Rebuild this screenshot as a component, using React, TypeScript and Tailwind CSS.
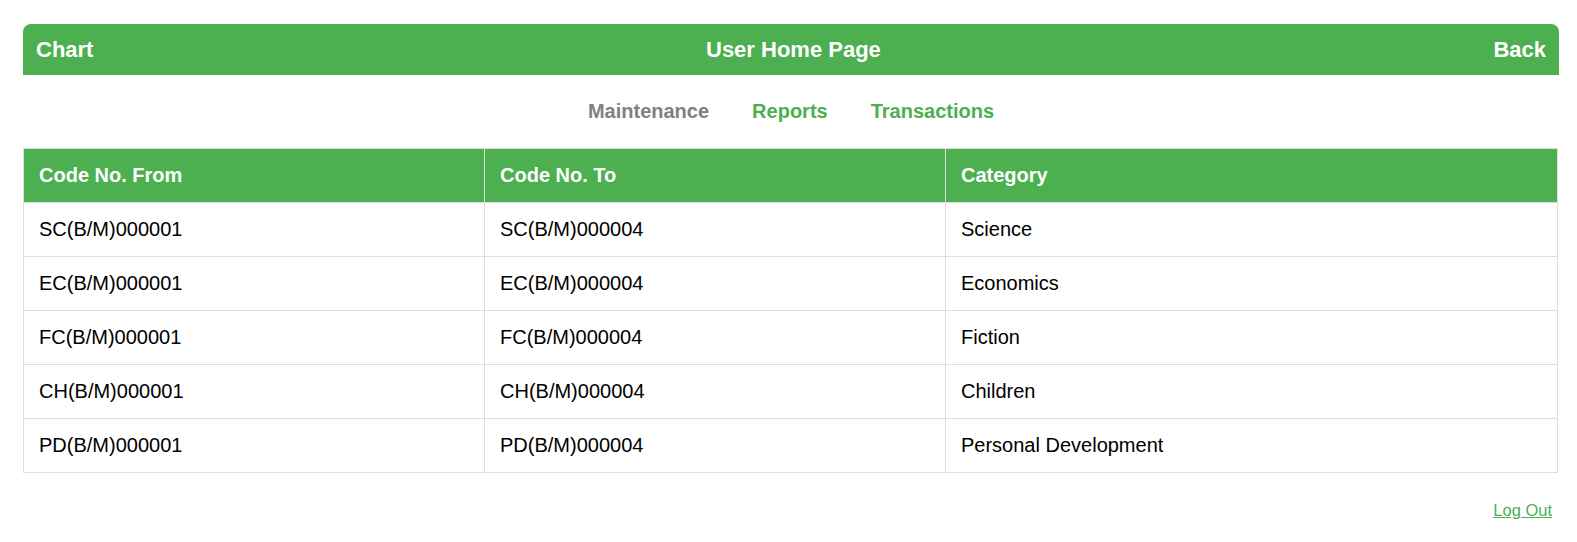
import React from 'react';

const rows = [
	{ from: 'SC(B/M)000001', to: 'SC(B/M)000004', category: 'Science' },
	{ from: 'EC(B/M)000001', to: 'EC(B/M)000004', category: 'Economics' },
	{ from: 'FC(B/M)000001', to: 'FC(B/M)000004', category: 'Fiction' },
	{ from: 'CH(B/M)000001', to: 'CH(B/M)000004', category: 'Children' },
	{ from: 'PD(B/M)000001', to: 'PD(B/M)000004', category: 'Personal Development' },
];

function App() {
	return (
		<div className="min-h-[542px] bg-white pt-[24px] pl-[23px] pr-[18px] font-['Liberation_Sans',Arial,sans-serif]">
			{/* top bar */}
			<div className="flex h-[51px] items-center justify-between rounded-t-[8px] bg-[#4CAF50] px-[13px] text-[22px] font-bold text-white">
				<span>Chart</span>
				<span>User Home Page</span>
				<span>Back</span>
			</div>

			<div className="flex h-[73px] items-center justify-center gap-[43px] pb-[2px] text-[20px] font-bold">
				<span className="text-[#808080]">Maintenance</span>
				<span className="text-[#4CAF50]">Reports</span>
				<span className="text-[#4CAF50]">Transactions</span>
			</div>

			<table className="w-[1535px] table-fixed border-collapse border border-[#ddd] text-[20px] text-black">
				<thead>
					<tr className="bg-[#4CAF50] text-left text-white">
						<th className="h-[54px] w-[461px] border border-[#ddd] px-[15px] pb-[1px] font-bold">Code No. From</th>
						<th className="h-[54px] w-[461px] border border-[#ddd] px-[15px] pb-[1px] font-bold">Code No. To</th>
						<th className="h-[54px] border border-[#ddd] px-[15px] pb-[1px] font-bold">Category</th>
					</tr>
				</thead>
				<tbody>
					{rows.map((r) => (
						<tr key={r.from}>
							<td className="h-[54px] border border-[#ddd] px-[15px] pb-[2px]">{r.from}</td>
							<td className="h-[54px] border border-[#ddd] px-[15px] pb-[2px]">{r.to}</td>
							<td className="h-[54px] border border-[#ddd] px-[15px] pb-[2px]">{r.category}</td>
						</tr>
					))}
				</tbody>
			</table>

			<div className="flex justify-end pt-[25px] pr-[7px]">
				<a href="#" className="text-[16.5px] text-[#4CAF50] underline">
					Log Out
				</a>
			</div>
		</div>
	);
}

export default App;
